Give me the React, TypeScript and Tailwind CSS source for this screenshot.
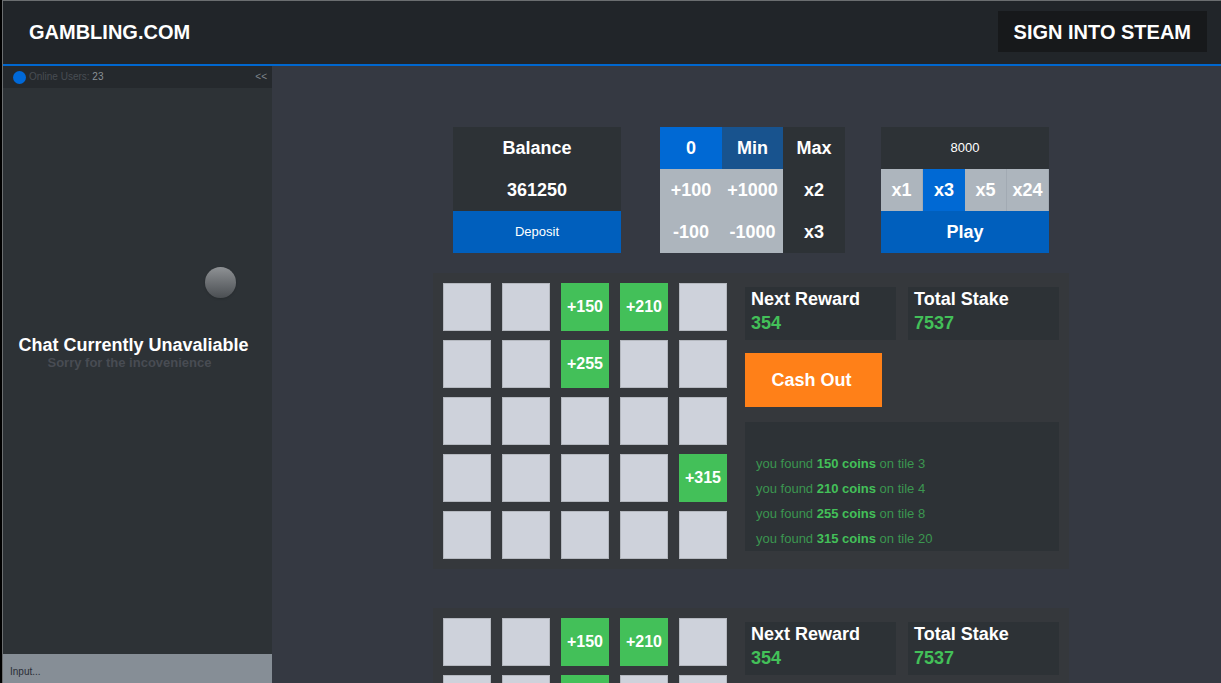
import { useState } from "react";

const FOUND: Record<number, number> = { 3: 150, 4: 210, 8: 255, 20: 315 };
const TILES = Array.from({ length: 25 }, (_, i) => i + 1);
const MULTIPLIERS = ["x1", "x3", "x5", "x24"];

function Header() {
  return (
    <header className="flex h-[65px] shrink-0 items-center justify-between border-b-2 border-[#0067cf] bg-[#212529] pr-[14px] pb-[2px] pl-[26px]">
      <a href="#" className="text-[20px] leading-6 font-bold">
        GAMBLING.COM
      </a>
      <button type="button" className="h-[41px] bg-[#17191b] px-4 text-[20px] leading-6 font-bold">
        SIGN INTO STEAM
      </button>
    </header>
  );
}

function Chat() {
  return (
    <aside className="relative flex w-[269px] shrink-0 flex-col bg-[#2d3236]">
      <div className="flex h-[22px] items-center bg-[#25292d] pr-[5px] pl-[10px] text-[10px] leading-4">
        <span className="mr-[3px] size-[13px] rounded-full bg-[#0069d9]" />
        <p className="text-[#484d53]">
          Online Users: <span className="text-[#8b9197]">23</span>
        </p>
        <button type="button" aria-label="Collapse chat" className="ml-auto text-[#7f858b]">
          &lt;&lt;
        </button>
      </div>
      <div className="flex flex-1 flex-col items-center justify-center pr-2 pb-9 font-bold">
        <h2 className="text-[18px] leading-5">Chat Currently Unavaliable</h2>
        <p className="pr-2 text-[13px] leading-4 text-[#484c53]">Sorry for the incovenience</p>
      </div>
      <input
        type="text"
        aria-label="Chat message"
        placeholder="Input..."
        className="h-[29px] w-full bg-[#868e96] pt-[6px] pl-[7px] text-[10px] text-[#2b2f36] outline-none placeholder:text-[#2b2f36]"
      />
      <span className="absolute top-[201px] left-[202px] size-[31px] rounded-full bg-linear-to-b from-[#8f9295] to-[#4b4f53] shadow" />
    </aside>
  );
}

function Controls() {
  const [active, setActive] = useState("x3");
  return (
    <div className="flex text-[18px] leading-6 font-bold">
      <section className="mr-[39px] grid w-[168px] auto-rows-[42px] bg-[#2d3236] text-center">
        <h2 className="self-center">Balance</h2>
        <p className="self-center">361250</p>
        <button type="button" className="bg-[#005fbd] text-[13px] font-normal">
          Deposit
        </button>
      </section>
      <section className="mr-9 grid auto-rows-[42px] grid-cols-[62px_61px_62px] bg-[#2d3236]">
        <button type="button" className="bg-[#0069d4]">0</button>
        <button type="button" className="bg-[#18538e]">Min</button>
        <button type="button">Max</button>
        <button type="button" className="bg-[#adb5bd]">+100</button>
        <button type="button" className="bg-[#adb5bd]">+1000</button>
        <button type="button">x2</button>
        <button type="button" className="bg-[#adb5bd]">-100</button>
        <button type="button" className="bg-[#adb5bd]">-1000</button>
        <button type="button">x3</button>
      </section>
      <section className="grid w-[168px] auto-rows-[42px] grid-cols-4 bg-[#2d3236]">
        <input
          type="text"
          aria-label="Stake"
          defaultValue="8000"
          className="col-span-4 w-full bg-transparent text-center text-[13px] font-normal outline-none"
        />
        {MULTIPLIERS.map((m) => (
          <button
            key={m}
            type="button"
            onClick={() => setActive(m)}
            className={m === active ? "bg-[#0069d4]" : "border-r border-[#a2aab3] bg-[#adb5bd]"}
          >
            {m}
          </button>
        ))}
        <button type="button" className="col-span-4 bg-[#005fbd]">
          Play
        </button>
      </section>
    </div>
  );
}

function Stat({ label, value }: { label: string; value: string }) {
  return (
    <div className="h-[53px] bg-[#2d3236] pl-[6px] text-[18px] leading-6 font-bold">
      <h3>{label}</h3>
      <p className="text-[#43c059]">{value}</p>
    </div>
  );
}

function Game() {
  return (
    <section className="flex bg-[#35383c] p-[10px]">
      <div className="mr-[18px] grid auto-rows-[48px] grid-cols-[repeat(5,48px)] gap-x-[11px] gap-y-[9px]">
        {TILES.map((n) =>
          FOUND[n] ? (
            <button key={n} type="button" className="bg-[#43c059] text-[16px] leading-6 font-bold">
              +{FOUND[n]}
            </button>
          ) : (
            <button key={n} type="button" aria-label={`Tile ${n}`} className="border border-[#b4b8bf] bg-[#ced2db]" />
          ),
        )}
      </div>
      <div className="flex w-[314px] flex-col pt-[4px] pb-[8px]">
        <div className="mb-[13px] grid grid-cols-2 gap-3">
          <Stat label="Next Reward" value="354" />
          <Stat label="Total Stake" value="7537" />
        </div>
        <button
          type="button"
          className="mb-[15px] h-[54px] w-[137px] bg-[#ff8018] pr-1 text-[18px] leading-6 font-bold"
        >
          Cash Out
        </button>
        <ul className="flex flex-1 flex-col justify-end bg-[#2d3236] pl-[11px] text-[13px] leading-[25px] text-[#3b9650]">
          {Object.entries(FOUND).map(([tile, coins]) => (
            <li key={tile}>
              you found <strong className="text-[#43c059]">{coins} coins</strong> on tile {tile}
            </li>
          ))}
        </ul>
      </div>
    </section>
  );
}

export default function App() {
  return (
    <div className="flex h-screen flex-col overflow-hidden border-l-2 border-black bg-[#353942] font-['Liberation_Sans',Arial,sans-serif] text-white">
      <div className="flex min-h-0 flex-1 flex-col border-t border-l border-[#6b6e70]">
        <Header />
        <div className="flex min-h-0 flex-1">
          <Chat />
          <main className="flex min-w-0 flex-1 flex-col items-center overflow-y-auto pt-[61px] pl-[9px] [scrollbar-width:none]">
            <Controls />
            <div className="mt-5 flex flex-col gap-[39px]">
              <Game />
              <Game />
            </div>
          </main>
        </div>
      </div>
    </div>
  );
}
